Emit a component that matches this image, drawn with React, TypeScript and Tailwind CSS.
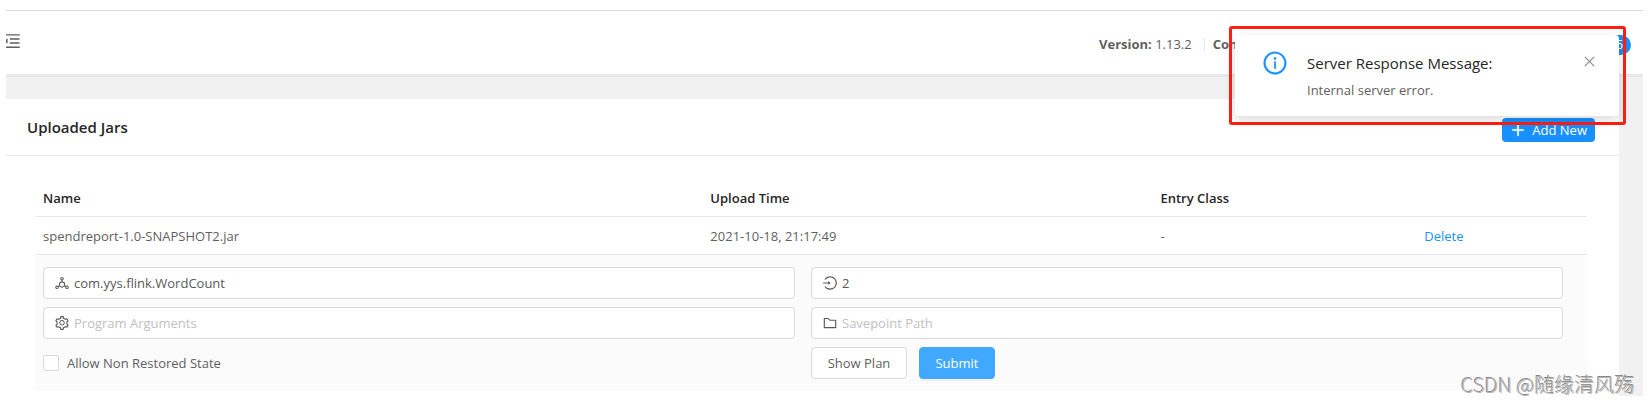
import type { ReactNode } from "react";
import {
  AiOutlineClose,
  AiOutlineDeploymentUnit,
  AiOutlineFolder,
  AiOutlineInfoCircle,
  AiOutlineLogin,
  AiOutlineMenuFold,
  AiOutlinePlus,
  AiOutlineSetting,
} from "react-icons/ai";

type FieldProps = {
  label: string;
  icon: ReactNode;
  value?: string;
};

function Field({ label, icon, value }: FieldProps) {
  return (
    <label className="flex h-8 min-w-0 flex-1 items-center gap-1 rounded border border-[#d9d9d9] bg-white px-2.5 text-base text-[#595959]">
      {icon}
      <input
        type="text"
        aria-label={label}
        placeholder={label}
        defaultValue={value}
        className="min-w-0 flex-1 bg-transparent pt-0.5 text-[13px] outline-none placeholder:text-[#bfbfbf]"
      />
    </label>
  );
}

function Header() {
  return (
    <header className="relative flex h-[63px] items-center justify-between overflow-hidden bg-white pr-3">
      <button type="button" aria-label="Toggle menu" className="-ml-1 pb-1 text-xl leading-none">
        <AiOutlineMenuFold />
      </button>
      <div className="flex w-[532px] items-center justify-between pt-1">
        <div className="flex items-center">
          <span>
            <strong className="font-bold">Version:</strong> 1.13.2
          </span>
          <span className="mr-2 ml-3 h-[13px] w-px bg-[#e8e8e8]" />
          <strong className="font-bold">Commit:</strong>
        </div>
        <span className="flex h-5 items-center rounded-full bg-[#1890ff] px-2 text-xs text-white">5</span>
      </div>
    </header>
  );
}

function Notification() {
  return (
    <div className="absolute top-[26px] right-[23px] w-[397px] rounded-[3px] border-3 border-[#ff1f14] pt-1.5 pr-1 pb-1.5 pl-[3px]">
      <div
        role="alert"
        className="flex items-start rounded bg-white px-6 py-4 shadow-[0_4px_12px_rgba(0,0,0,0.15)]"
      >
        <AiOutlineInfoCircle className="-mt-px ml-[3px] size-[26px] text-[#1890ff]" strokeWidth={10} />
        <div className="ml-[19px] flex-1">
          <div className="mb-1 text-[15px] leading-6 text-[#262626]">Server Response Message:</div>
          <div className="pt-px leading-5">Internal server error.</div>
        </div>
        <button type="button" aria-label="Close" className="-mr-0.5 mt-[3px] text-[15px] text-[#8c8c8c]">
          <AiOutlineClose />
        </button>
      </div>
    </div>
  );
}

function JobForm() {
  return (
    <form className="flex flex-col gap-2" onSubmit={(e) => e.preventDefault()}>
      <div className="flex gap-4">
        <Field label="Entry Class" icon={<AiOutlineDeploymentUnit />} value="com.yys.flink.WordCount" />
        <Field label="Parallelism" icon={<AiOutlineLogin />} value="2" />
      </div>
      <div className="flex gap-4">
        <Field label="Program Arguments" icon={<AiOutlineSetting />} />
        <Field label="Savepoint Path" icon={<AiOutlineFolder />} />
      </div>
      <div className="flex gap-4">
        <label className="flex h-8 flex-1 items-center gap-2">
          <input
            type="checkbox"
            className="size-4 appearance-none rounded-xs border border-[#d9d9d9] bg-white checked:bg-[#1890ff]"
          />
          Allow Non Restored State
        </label>
        <div className="flex flex-1 gap-3">
          <button type="button" className="h-8 w-24 rounded border border-[#d9d9d9] bg-white">
            Show Plan
          </button>
          <button
            type="submit"
            className="h-8 w-19 rounded border border-[#40a9ff] bg-[#40a9ff] text-white shadow-[0_2px_0_rgba(0,0,0,0.04)]"
          >
            Submit
          </button>
        </div>
      </div>
    </form>
  );
}

function JarTable() {
  return (
    <table className="w-full table-fixed border-collapse text-left leading-[21px]">
      <colgroup>
        <col className="w-[43%]" />
        <col className="w-[29%]" />
        <col className="w-[17%]" />
        <col className="w-[11%]" />
      </colgroup>
      <thead>
        <tr className="border-b border-[#e8e8e8] text-[#262626]">
          <th className="px-2 pt-[9px] pb-[7px] font-semibold">Name</th>
          <th className="px-2 pt-[9px] pb-[7px] font-semibold">Upload Time</th>
          <th className="px-2 pt-[9px] pb-[7px] font-semibold">Entry Class</th>
          <th className="px-2 pt-[9px] pb-[7px]" aria-label="Actions" />
        </tr>
      </thead>
      <tbody>
        <tr className="border-b border-[#e8e8e8]">
          <td className="px-2 pt-[9px] pb-[7px]">spendreport-1.0-SNAPSHOT2.jar</td>
          <td className="px-2 pt-[9px] pb-[7px]">2021-10-18, 21:17:49</td>
          <td className="px-2 pt-[9px] pb-[7px]">-</td>
          <td className="px-2 pt-[9px] pb-[7px]">
            <a href="#delete" className="text-[#1890ff]">
              Delete
            </a>
          </td>
        </tr>
        <tr className="bg-[#fbfbfb]">
          <td colSpan={4} className="py-3 pr-6 pl-2">
            <JobForm />
          </td>
        </tr>
      </tbody>
    </table>
  );
}

export default function App() {
  return (
    <div className="relative bg-white px-1.5 pt-2.5 pb-[7px] font-['Open_Sans','Noto_Sans_CJK_SC',sans-serif] text-[13px] text-[#5f5f5f]">
      <div className="border-t border-[#dcdcdc] bg-[#f1f1f1]">
        <Header />
        <main className="border-t-3 border-[#e8e8e8] pt-[22px] pr-6">
          <section className="bg-white">
            <div className="flex h-[57px] items-center justify-between border-b border-[#e8e8e8] pr-6 pl-[21px]">
              <h1 className="text-[15px] font-semibold text-[#262626]">Uploaded Jars</h1>
              <button
                type="button"
                className="mt-1.5 flex h-6 items-center gap-1.5 rounded bg-[#1890ff] px-2 text-white"
              >
                <AiOutlinePlus className="size-4" strokeWidth={40} />
                <span className="pt-0.5">Add New</span>
              </button>
            </div>
            <div className="pt-[23px] pr-8 pb-[5px] pl-[29px]">
              <JarTable />
            </div>
          </section>
        </main>
      </div>
      <Notification />
      <div className="absolute right-3.5 bottom-1 font-['Noto_Sans_CJK_SC',sans-serif] text-xl font-light text-[#b5b5b5] [text-shadow:-1px_-1px_0_#888]">
        CSDN @随缘清风殇
      </div>
    </div>
  );
}
